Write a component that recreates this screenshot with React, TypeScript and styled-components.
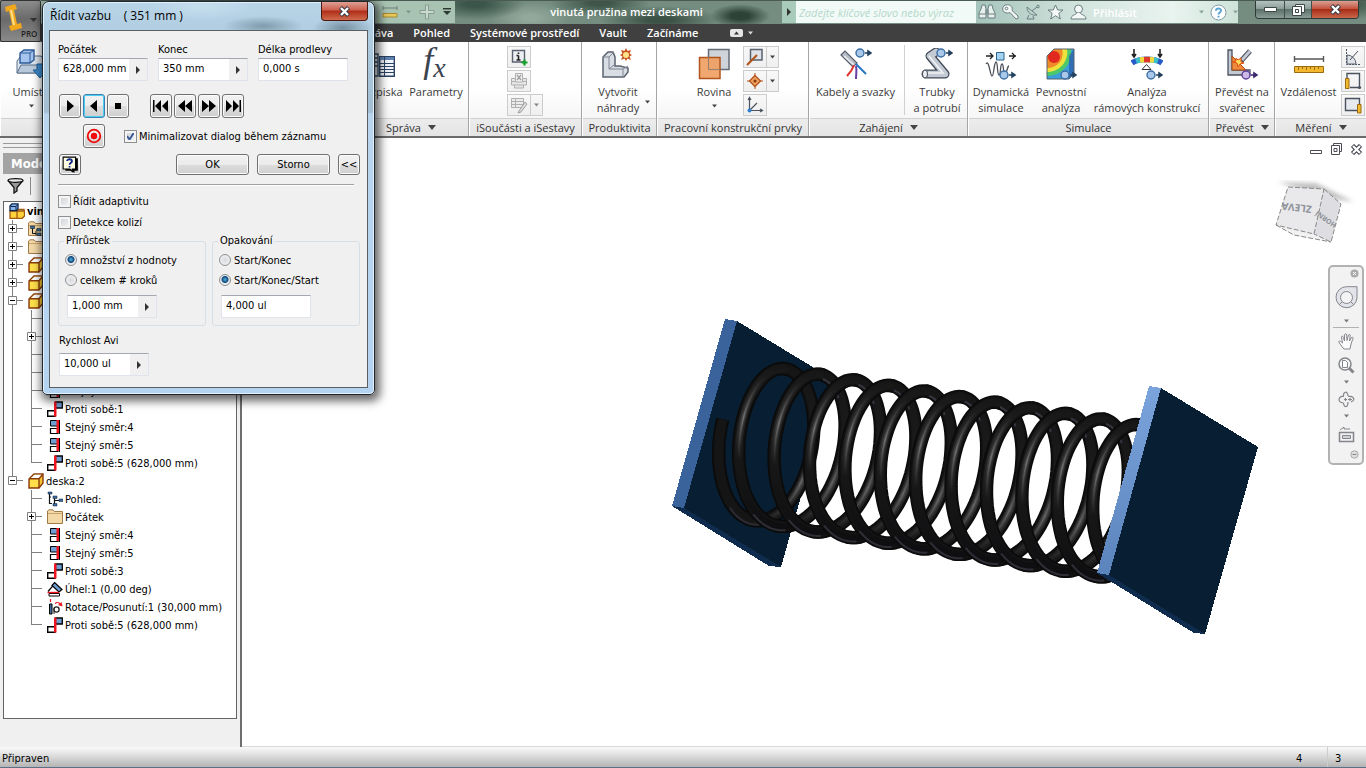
import React from "react";
import styled, { createGlobalStyle } from "styled-components";

const UI = '"Open Sans", "Noto Sans", sans-serif';
const DLG = '"DejaVu Sans Condensed", "DejaVu Sans", sans-serif';

const Global = createGlobalStyle`
  *, *::before, *::after { box-sizing: border-box; }
  body { margin: 0; background: #fff; font-family: ${UI}; font-size: 11px; color: #222; }
  button, input { font: inherit; color: inherit; margin: 0; padding: 0; }
  button { border: 0; background: none; }
  svg { display: block; flex: none; }
`;

/* ---------- frame ---------- */
const App_ = styled.div`
  position: relative;
  display: flex;
  flex-direction: column;
  min-height: 100vh;
`;
const Header = styled.header`
  display: flex;
  background:
    radial-gradient(ellipse 50px 16px at 475px 4px, #3c554a 20%, transparent),
    radial-gradient(ellipse 40px 16px at 530px 18px, #93a79b 20%, transparent),
    radial-gradient(ellipse 50px 14px at 600px 3px, #3f554a 20%, transparent),
    radial-gradient(ellipse 60px 14px at 660px 20px, #3c5246 20%, transparent),
    radial-gradient(ellipse 30px 12px at 740px 16px, #2d4238 30%, transparent),
    radial-gradient(ellipse 60px 16px at 1340px 4px, #3e5648 20%, transparent),
    #748d80;
`;
const AppButton = styled.button`
  width: 41px;
  height: 42px;
  border: 1px solid #333;
  border-radius: 2px;
  background: linear-gradient(#8c8c8c, #6a6a6a 45%, #8a8a8a);
`;
const HeaderRows = styled.div`
  flex: 1;
  min-width: 0;
`;
const TitleRow = styled.div`
  display: flex;
  height: 24px;
  border-top: 1px solid #4a5b54;
`;
const QuickBar = styled.div`
  width: 414px;
  height: 22px;
  display: flex;
  align-items: center;
  justify-content: flex-end;
  gap: 8px;
  padding-right: 4px;
  background: #a9c3b2;
`;
const DocTitle = styled.h1`
  flex: 1;
  margin: 0;
  padding-left: 16px;
  font-size: 11px;
  line-height: 22px;
  font-weight: 600;
  color: #fff;
  text-align: center;
  white-space: nowrap;
`;
const Search = styled.div`
  width: 194px;
  display: flex;
  height: 22px;
  background: #f2faf7;
`;
const SearchArrow = styled.button`
  width: 14px;
  background: #a9cbbb;
  display: flex;
  align-items: center;
  justify-content: center;
`;
const SearchInput = styled.input`
  flex: 1;
  min-width: 0;
  border: 0;
  padding-left: 3px;
  background: transparent;
  font-style: italic;
  &::placeholder { color: #b4d8ca; opacity: 1; }
`;
const InfoTools = styled.div`
  width: 262px;
  height: 22px;
  padding-left: 2px;
  display: flex;
  align-items: center;
  gap: 6px;
  background: linear-gradient(90deg, #a5c4bb, #d3e4de 40%, #e9f3ef 75%, #cfe3da);
`;
const SignIn = styled.button`
  width: 112px;
  text-align: left;
  font-weight: 600;
  color: #fff;
  display: flex;
  align-items: center;
  justify-content: space-between;
`;
const WinButtons = styled.div`
  margin: 0 7px 0 17px;
  display: flex;
  height: 18px;
  border: 1px solid #2f3a38;
  border-top: 0;
  border-radius: 0 0 4px 4px;
  overflow: hidden;
`;
const WinButton = styled.button<{ $red?: boolean; $w: number }>`
  width: ${(p) => p.$w}px;
  display: flex;
  align-items: center;
  justify-content: center;
  border-right: 1px solid #3f4c48;
  background: ${(p) =>
    p.$red
      ? "linear-gradient(#d9a093, #c4543f 45%, #a82c16 50%, #c9684b)"
      : "linear-gradient(#b5c2bf, #8c9e99 45%, #5d706a 50%, #8a9d96)"};
  &:last-child { border-right: 0; }
`;
const Tabs = styled.nav`
  display: flex;
  height: 18px;
  padding-left: 316px;
  background: #404040;
`;
const Tab = styled.button`
  margin-right: 20px;
  line-height: 18px;
  font-weight: 600;
  color: #fff;
  white-space: nowrap;
`;
const TabMenu = styled.div`
  display: flex;
  align-items: center;
  gap: 5px;
  margin-left: 12px;
`;

/* ---------- ribbon ---------- */
const Ribbon = styled.div`
  display: flex;
  height: 96px;
  border-bottom: 2px solid #6b6b6b;
  background: #fff;
`;
const Panel = styled.section<{ $w: number; $grow?: boolean }>`
  flex: ${(p) => (p.$grow ? 1 : "none")};
  width: ${(p) => p.$w}px;
  display: flex;
  flex-direction: column;
  border-right: ${(p) => (p.$grow ? 0 : "1px solid #a5a5a5")};
  border-left: 1px solid #fff;
`;
const PanelBody = styled.div<{ $left?: number }>`
  flex: 1;
  display: flex;
  justify-content: ${(p) => (p.$left === undefined ? "center" : "flex-start")};
  padding-left: ${(p) => p.$left ?? 0}px;
  background: linear-gradient(#fff 60%, #f6f6f6);
`;
const PanelLabel = styled.div`
  height: 18px;
  display: flex;
  align-items: center;
  justify-content: center;
  gap: 7px;
  border-top: 1px solid #d0d0d0;
  background: linear-gradient(#ececec, #e4e4e4);
  color: #333;
  white-space: nowrap;
`;
const BigButton = styled.button<{ $w: number }>`
  width: ${(p) => p.$w}px;
  padding-top: 6px;
  display: flex;
  flex-direction: column;
  align-items: center;
  gap: 4px;
  color: #3a3a3a;
  line-height: 16px;
  white-space: nowrap;
`;
const BigLabel = styled.span`
  display: block;
  text-align: center;
`;
const SideArrow = styled.span`
  align-self: flex-end;
  padding-bottom: 14px;
`;
const SmallCol = styled.div`
  padding-top: 4px;
  display: flex;
  flex-direction: column;
  gap: 2px;
`;
const SmallRow = styled.div`
  display: flex;
  height: 22px;
`;
const SmallButton = styled.button<{ $w?: number }>`
  width: ${(p) => p.$w ?? 24}px;
  height: 22px;
  margin-right: -1px;
  display: flex;
  align-items: center;
  justify-content: center;
  border: 1px solid #ccc;
  background: linear-gradient(#f8f8f8, #efefef);
`;
const Divider = styled.div`
  width: 1px;
  margin: 3px 3px;
  background: #d0d0d0;
`;

/* ---------- work area ---------- */
const Work = styled.main`
  flex: 1;
  display: flex;
  min-height: 608px;
`;
const Side = styled.aside`
  width: 242px;
  display: flex;
  flex-direction: column;
  padding: 5px 3px 28px 3px;
  border-right: 2px solid #6e6e6e;
  background: #f0f0f0;
  font-family: ${DLG};
  color: #000;
`;
const Grip = styled.div`
  height: 5px;
  border: solid #9a9a9a;
  border-width: 1px 0;
`;
const SideTitle = styled.h2`
  margin: 5px 0 0;
  height: 21px;
  padding-left: 8px;
  line-height: 21px;
  font-size: 13px;
  color: #fff;
  background: #a3a3a3;
`;
const SideTools = styled.div`
  height: 27px;
  display: flex;
  align-items: center;
  gap: 6px;
  padding: 0 0 4px 4px;
`;
const ToolLine = styled.div`
  width: 1px;
  height: 18px;
  background: #8a8a8a;
`;
const Tree = styled.ul`
  flex: 1;
  margin: 0;
  padding: 0;
  list-style: none;
  border: 1px solid #646464;
  background: #fff;
  overflow: hidden;
`;
const Node = styled.li`
  height: 18px;
  display: flex;
  align-items: center;
  white-space: nowrap;
`;
const NodeIcon = styled.span`
  width: 16px;
  margin: 0 2px 0 5px;
`;
const NodeText = styled.span<{ $b?: boolean }>`
  font-weight: ${(p) => (p.$b ? 700 : 400)};
`;

const Canvas = styled.div`
  position: relative;
  flex: 1;
  min-width: 0;
  background: #fff;
  border-bottom: 1px solid #d8d8d8;
`;
const Model = styled.svg`
  width: 100%;
  height: 100%;
`;
const DocButtons = styled.div`
  position: absolute;
  top: 5px;
  right: 3px;
  display: flex;
  gap: 7px;
`;
const CubeSpot = styled.div`
  position: absolute;
  top: 40px;
  right: 10px;
`;
const NavBar = styled.div`
  position: absolute;
  top: 127px;
  right: 2px;
  width: 36px;
  height: 200px;
  padding-top: 2px;
  display: flex;
  flex-direction: column;
  align-items: center;
  border: 2px solid #b2b2b2;
  border-radius: 5px;
  background: #f2f2f2;
`;
const NavSlot = styled.button<{ $h: number; $end?: boolean }>`
  width: 26px;
  height: ${(p) => p.$h}px;
  display: flex;
  align-items: center;
  justify-content: ${(p) => (p.$end ? "flex-end" : "center")};
`;
const NavRule = styled.div`
  width: 26px;
  height: 1px;
  background: #b2b2b2;
`;

const Status = styled.footer`
  height: 22px;
  display: flex;
  justify-content: space-between;
  padding-left: 2px;
  line-height: 24px;
  background: linear-gradient(#fafafa, #d8d8d8 50%, #b4b4b4);
  border-bottom: 2px solid #5c7186;
  font-family: ${DLG};
  color: #000;
`;
const StatusCounts = styled.div`
  display: flex;
  height: 20px;
`;
const Count = styled.span<{ $w: number; $first?: boolean }>`
  width: ${(p) => p.$w}px;
  padding-left: 7px;
  border-left: ${(p) => (p.$first ? 0 : "1px solid #cdcdcd")};
`;

/* ---------- dialog ---------- */
const Dialog = styled.section`
  position: absolute;
  left: 42px;
  top: 1px;
  width: 333px;
  display: flex;
  flex-direction: column;
  padding: 0 6px 6px;
  border: 1px solid #1f262c;
  border-radius: 7px 7px 5px 5px;
  box-shadow: inset 0 0 0 1px #e2f1fb, 2px 3px 10px 3px rgba(0, 0, 0, 0.6);
  background:
    radial-gradient(ellipse 40px 10px at 220px 24px, #7f9bad, transparent),
    radial-gradient(ellipse 50px 14px at 160px 4px, #c6dfee, transparent),
    radial-gradient(ellipse 30px 12px at 300px 26px, #7590a2, transparent),
    linear-gradient(#b9d5e8, #b0cde1 30px, #a3bed2 110px, #b9d5ee 112px, #b4d3f0);
  font-family: ${DLG};
  color: #000;
`;
const DialogHead = styled.header`
  display: flex;
  justify-content: space-between;
  height: 28px;
`;
const DialogTitle = styled.h2`
  margin: 0;
  padding: 7px 0 0 1px;
  font-family: ${UI};
  font-size: 12px;
  line-height: 14px;
  font-weight: 400;
  white-space: pre;
`;
const DialogClose = styled.button`
  width: 47px;
  height: 19px;
  display: flex;
  align-items: center;
  justify-content: center;
  border: 1px solid #4a1a12;
  border-top: 0;
  border-radius: 0 0 4px 4px;
  background: linear-gradient(#dea094, #cc5f4c 45%, #b02c18 50%, #cf6b4c);
`;
const Client = styled.form`
  display: flex;
  flex-direction: column;
  height: 358px;
  padding: 10px 6px 0 8px;
  border: 1px solid #5a5f64;
  background: #f0f0f0;
`;
const Row = styled.div<{ $gap?: number; $mt?: number; $pl?: number }>`
  display: flex;
  align-items: center;
  gap: ${(p) => p.$gap ?? 10}px;
  margin-top: ${(p) => p.$mt ?? 0}px;
  padding-left: ${(p) => p.$pl ?? 0}px;
`;
const Field = styled.label<{ $lh?: number }>`
  display: block;
  width: 90px;
  line-height: ${(p) => p.$lh ?? 17}px;
  white-space: nowrap;
`;
const Box = styled.span`
  display: flex;
  width: 90px;
  height: 23px;
  border: 1px solid #dfe3ea;
  border-top-color: #a4a8b0;
  background: #fff;
`;
const BoxInput = styled.input`
  flex: 1;
  min-width: 0;
  border: 0;
  padding: 0 0 2px 4px;
  background: transparent;
`;
const Spin = styled.span`
  width: 18px;
  display: flex;
  align-items: center;
  justify-content: center;
  background: #f0f0f0;
`;
const PushButton = styled.button<{ $w: number; $h: number; $hot?: boolean }>`
  width: ${(p) => p.$w}px;
  height: ${(p) => p.$h}px;
  display: flex;
  align-items: center;
  justify-content: center;
  border: 1px solid ${(p) => (p.$hot ? "#3c7fb1" : "#707070")};
  border-radius: 3px;
  box-shadow: inset 0 0 0 1px ${(p) => (p.$hot ? "#48d0f4" : "#fbfbfb")};
  background: linear-gradient(#f2f2f2, #ebebeb 50%, #dddddd 50%, #cfcfcf);
`;
const Spacer = styled.span<{ $w: number }>`
  width: ${(p) => p.$w}px;
`;
const Check = styled.label`
  display: flex;
  align-items: center;
  gap: 2px;
  height: 21px;
  white-space: nowrap;
`;
const CheckInput = styled.input`
  appearance: none;
  width: 13px;
  height: 13px;
  border: 1px solid #8e8f8f;
  box-shadow: inset 0 0 0 2px #f4f4f4;
  background: linear-gradient(135deg, #cbcfd5, #f6f6f6);
  &:checked {
    background:
      url("data:image/svg+xml,%3Csvg xmlns='http://www.w3.org/2000/svg' viewBox='0 0 11 11'%3E%3Cpath d='M2 5 4.500 8.500 9 1.500' fill='none' stroke='%233b5a9a' stroke-width='2'/%3E%3C/svg%3E"),
      linear-gradient(135deg, #cbcfd5, #f6f6f6);
  }
`;
const Rule = styled.hr`
  width: 296px;
  margin: 9px 0 5px;
  border: 0;
  border-top: 1px solid #a0a0a0;
  border-bottom: 1px solid #fff;
`;
const Group = styled.fieldset<{ $w: number }>`
  width: ${(p) => p.$w}px;
  height: 93px;
  min-width: 0;
  margin: 0;
  padding: 1px 0 0 6px;
  border: 1px solid #d5dfe5;
  border-radius: 3px;
`;
const Legend = styled.legend`
  padding: 0 2px;
  margin-left: -1px;
  line-height: 16px;
`;
const Radio = styled.label`
  display: flex;
  align-items: center;
  gap: 3px;
  height: 20px;
`;
const RadioInput = styled.input`
  appearance: none;
  width: 12px;
  height: 12px;
  border: 1px solid #8e8f8f;
  border-radius: 50%;
  background: radial-gradient(#d8dade, #f8f8f8);
  &:checked { background: radial-gradient(circle at 50% 45%, #4fb4e0 0, #12457a 3px, #e8ecf0 4px); }
`;

/* ---------- small glyphs ---------- */
const Down = ({ w = 5, c = "#444" }: { w?: number; c?: string }) => (
  <svg width={w} height={Math.ceil(w / 2) + 1} viewBox="0 0 8 5"><path d="M0 0H8L4 5Z" fill={c} /></svg>
);
const Right = () => (
  <svg width="5" height="8" viewBox="0 0 5 8"><path d="M0 0 4 4 0 8Z" fill="#333" /></svg>
);
const Goto = ({ x, y, c = "#a9c8ea", s = "#3b6ea5", a = "#24415f" }: any) => (
  <g transform={`translate(${x} ${y})`}>
    <path d="M5 0H10M8-2 11 0 8 2Z" stroke={a} strokeWidth="1.600" fill={a} />
    <circle cx="0" cy="0" r="4" fill={c} stroke={s} strokeWidth="1.400" />
  </g>
);
const CloseX = ({ s = 11 }: { s?: number }) => (
  <svg width={s} height="11" viewBox="0 0 12 11">
    <path d="M2 1.500 10 9.500M10 1.500 2 9.500" stroke="#3c3c48" strokeWidth="4.400" />
    <path d="M2.500 2 9.500 9M9.500 2 2.500 9" stroke="#fff" strokeWidth="2.400" />
  </svg>
);

/* ---------- spring geometry ---------- */
const TAU = Math.PI * 2;
function helix(from: number, to: number, px: number, py: number, s = 1) {
  const R = 78.2 * s;
  const m = 42.8 * s;
  const n = 40;
  let d = "";
  for (let i = 0; i <= n; i++) {
    const t = from + ((to - from) * i) / n;
    const x = (px * t) / TAU + R * 0.156 * Math.cos(t) - m * 0.988 * Math.sin(t);
    const y = (py * t) / TAU - R * 0.988 * Math.cos(t) - m * 0.156 * Math.sin(t);
    d += `${i ? "L" : "M"}${x.toFixed(1)} ${y.toFixed(1)}`;
  }
  return d;
}
const Wire = ({ from, to, px = 35.4, py = 5.6, g }: any) => {
  const d = helix(from, to, px, py);
  return (
    <g fill="none">
      <path d={d} stroke="#0a0a0a" strokeWidth="13.400" />
      <path d={d} stroke="#101011" strokeWidth="11" />
      <path d={d} stroke="#151516" strokeWidth="9" />
      <path d={d} stroke={`url(#${g}1)`} strokeWidth="7" />
      <path d={helix(from, to, px, py, 0.995)} stroke={`url(#${g}2)`} strokeWidth="4" />
      <path d={helix(from, to, px, py, 0.99)} stroke={`url(#${g}3)`} strokeWidth="1.600" />
    </g>
  );
};
const Shade = ({ id, c, y }: any) => (
  <linearGradient id={id} gradientUnits="userSpaceOnUse" x1="0" y1="-84" x2="0" y2="84">
    <stop offset="0" stopColor="#151516" />
    <stop offset={y - 0.24} stopColor="#1b1b1c" />
    <stop offset={y} stopColor={c} />
    <stop offset={y + 0.25} stopColor="#171718" />
    <stop offset="1" stopColor="#0e0e10" />
  </linearGradient>
);
const coils = Array.from({ length: 11 }, (_, k) => k);
const at = (k: number) => `translate(${772.6 + 35.4 * k} ${446 + 5.6 * k})`;

const SpringModel = () => (
  <Model viewBox="242 138 1124 608" role="img" aria-label="Model pružiny mezi deskami">
    <defs>
      <Shade id="f1" c="#2a2a2b" y={0.33} />
      <Shade id="f2" c="#424243" y={0.33} />
      <Shade id="f3" c="#6e6e6e" y={0.33} />
      <Shade id="b1" c="#303031" y={0.72} />
      <Shade id="b2" c="#484849" y={0.72} />
      <Shade id="b3" c="#646464" y={0.72} />
      <linearGradient id="edgeR" x1="0" y1="0" x2="0" y2="1">
        <stop offset="0" stopColor="#7ba4dd" />
        <stop offset="1" stopColor="#5b84bd" />
      </linearGradient>
    </defs>
    <g shapeRendering="crispEdges">
      <path d="M725 319 737 321 684 508 672 506Z" fill="#3a629b" />
      <path d="M672 506 684 508 781 567 769 566Z" fill="#0f2c4e" />
      <path d="M737 321 834 380 781 567 684 508Z" fill="#081f33" />
    </g>
    <g transform={at(0)}>
      <Wire from={-Math.PI - 0.05} to={0} px={14} py={5.6} g="b" />
    </g>
    {coils.map((k) => (
      <g key={k} transform={at(k)}>
        <Wire from={Math.PI - 0.05} to={TAU + 0.05} g="b" />
        <path d={helix(5.6, 6.25, 35.4, 5.6, 0.95)} fill="none" stroke="#37353f" strokeWidth="2" />
      </g>
    ))}
    <g transform={at(0)}>
      <Wire from={-4.92} to={-Math.PI} px={14} py={5.6} g="n" />
      <path d={helix(-3.7, -2.9, 14, 5.6, 1.05)} fill="none" stroke="#2c2a33" strokeWidth="2" />
    </g>
    {coils.map((k) => (
      <g key={k} transform={at(k)}>
        <Wire from={-0.1} to={Math.PI + 0.25} g="f" />
        <path d={helix(2.6, 3.3, 35.4, 5.6, 1.05)} fill="none" stroke="#2f2d36" strokeWidth="2" />
      </g>
    ))}
    <g shapeRendering="crispEdges">
      <path d="M1149 386 1161 388 1109 575 1097 573Z" fill="url(#edgeR)" />
      <path d="M1097 573 1109 575 1205 634 1194 633Z" fill="#0f2c4e" />
      <path d="M1161 388 1258 447 1205 634 1109 575Z" fill="#081f33" />
    </g>
  </Model>
);

/* ---------- tree ---------- */
const Cube = () => (
  <svg width="16" height="16" viewBox="0 0 16 16">
    <path d="M1 6 6 1H15V10L11 15H1Z" fill="#f7c531" stroke="#8a3c0c" strokeWidth="1.400" />
    <path d="M2 6H11V14H2Z" fill="#ffe04a" />
    <path d="M2.500 5.500 6.500 1.700H14L10.500 5.500Z" fill="#fff" />
    <path d="M1 5.800H11V15M11 5.800 15 1" stroke="#8a3c0c" strokeWidth="1.400" fill="none" />
  </svg>
);
const Folder = ({ views }: { views?: boolean }) => (
  <svg width="16" height="16" viewBox="0 0 16 16">
    <path d="M.5 14.500V2L2 .8H6L7.500 2.500H15.500V14.500Z" fill="#f4d9a8" stroke="#a07a4a" />
    <path d="M1 4.500H15" stroke="#c9a36c" />
    {views && (
      <>
        <path d="M4.500 7V12.500H8M8 10V14M8 9H9" stroke="#111" fill="none" />
        <path d="M2.500 5H6.500V7.500H2.500ZM9 7.500H13V10H9ZM9 12H13V14.500H9Z" fill="#3d6da3" stroke="#122" strokeWidth=".6" />
      </>
    )}
  </svg>
);
const Mate = () => (
  <svg width="16" height="16" viewBox="0 0 16 16">
    <path d="M.7 9.700H8V15.300H.7Z" fill="#fff" stroke="#000" strokeWidth="1.400" />
    <path d="M8.500 1H15.300V7H8.500Z" fill="#6f9fd2" stroke="#000" strokeWidth="1.300" />
    <path d="M7 .5H9.500V15.500H7Z" fill="#f0141e" />
  </svg>
);
const Flush = () => (
  <svg width="16" height="16" viewBox="0 0 16 16">
    <path d="M3.500 1.500H11V7H3.500Z" fill="#6f9fd2" stroke="#000" />
    <path d="M5.500 9.500H11V14.500H3.500V9.500Z" fill="#fff" stroke="#000" strokeWidth="1.200" />
    <path d="M9.500 1H12V14H9.500Z" fill="#f0141e" />
    <path d="M12.500 1V15" stroke="#000" />
  </svg>
);
const Views = () => (
  <svg width="16" height="16" viewBox="0 0 16 16">
    <path d="M2.500 3V12.500H5M2.500 6H4M7.500 7V13M7.500 9.500H13" stroke="#111" fill="none" strokeWidth="1.200" />
    <path d="M1 1H5V3H1ZM6 5H10V7.500H6ZM12 8H16V10.500H12ZM6 12.500H10V15H6Z" fill="#3d6da3" stroke="#123" strokeWidth=".5" />
  </svg>
);
const Angle = () => (
  <svg width="16" height="16" viewBox="0 0 16 16">
    <path d="M1 10.500 7 3.500" stroke="#000" strokeWidth="1.200" />
    <path d="M7.500 1.500 15 8.500 12 11 5 4.500Z" fill="#6f9fd2" stroke="#000" strokeWidth="1.200" />
    <path d="M2 12.500H12.500V15H2Z" fill="#fff" stroke="#000" />
    <path d="M.5 11.500H12" stroke="#f0141e" strokeWidth="1.400" />
  </svg>
);
const Motion = () => (
  <svg width="16" height="16" viewBox="0 0 16 16">
    <path d="M2.500 5H5V15H2.500Z" fill="#3d6da3" stroke="#000" />
    <path d="M3.500 0V3M8 4.500C10 3 12 3 13.500 5.500" stroke="#f0141e" fill="none" strokeWidth="1.200" />
    <path d="M11 6 15.500 7.500 14.500 3Z" fill="#f0141e" />
    <circle cx="9.500" cy="10.500" r="2.600" fill="#fff" stroke="#222" strokeWidth="1.300" />
    <path d="M7 9V15" stroke="#222" />
  </svg>
);
const Assembly = () => (
  <svg width="16" height="16" viewBox="0 0 16 16">
    <path d="M1 8H15.500V13L13 15.500H1Z" fill="#ffd23c" stroke="#a05a10" strokeWidth="1.300" />
    <path d="M8 8V15M8 9 10 6.500H15V8" fill="none" stroke="#a05a10" strokeWidth="1.300" />
    <path d="M1 3 3 .8H9V5.500L7.500 7.700H1Z" fill="#8ab4e6" stroke="#0b2650" strokeWidth="1.300" />
    <path d="M1.500 3.500H7V7.500M7 3.500 9 1" stroke="#0b2650" fill="none" />
  </svg>
);
const icons: Record<string, React.ReactNode> = {
  asm: <Assembly />, cube: <Cube />, folder: <Folder />, vfolder: <Folder views />,
  mate: <Mate />, flush: <Flush />, views: <Views />, angle: <Angle />, motion: <Motion />,
};
/* box is the expander's sign; empty draws the passing line only; blank draws nothing */
const Guide = ({ box, last, empty, blank }: { box?: string; last?: boolean; empty?: boolean; blank?: boolean }) => (
  <svg width="19" height="18" viewBox="0 0 19 18">
    {!blank && (
      <path d={`M8.500 0V${last ? 9 : 18}${empty ? "" : "M8.500 8.500H19"}`} stroke="#808080" fill="none" />
    )}
    {box && (
      <>
        <path d="M4.500 4.500H12.500V12.500H4.500Z" fill="#fff" stroke="#808080" />
        <path d={`M6 8.500H11${box === "+" ? "M8.500 6V11" : ""}`} stroke="#000" />
      </>
    )}
  </svg>
);
type T = { i: string; t?: string; l: number; box?: string; last?: boolean; open?: boolean };
const tree: T[] = [
  { i: "asm", t: "vinutá", l: 0 },
  { i: "vfolder", l: 1, box: "+" },
  { i: "folder", l: 1, box: "+" },
  { i: "cube", l: 1, box: "+" },
  { i: "cube", l: 1, box: "+" },
  { i: "cube", l: 1, box: "-" },
  { i: "views", l: 2, open: true },
  { i: "folder", l: 2, box: "+", open: true },
  { i: "flush", l: 2, open: true },
  { i: "flush", l: 2, open: true },
  { i: "flush", t: "Stejný směr:3", l: 2, open: true },
  { i: "mate", t: "Proti sobě:1", l: 2, open: true },
  { i: "flush", t: "Stejný směr:4", l: 2, open: true },
  { i: "flush", t: "Stejný směr:5", l: 2, open: true },
  { i: "mate", t: "Proti sobě:5 (628,000 mm)", l: 2, open: true, last: true },
  { i: "cube", t: "deska:2", l: 1, box: "-", last: true },
  { i: "views", t: "Pohled:", l: 2 },
  { i: "folder", t: "Počátek", l: 2, box: "+" },
  { i: "flush", t: "Stejný směr:4", l: 2 },
  { i: "flush", t: "Stejný směr:5", l: 2 },
  { i: "mate", t: "Proti sobě:3", l: 2 },
  { i: "angle", t: "Úhel:1 (0,00 deg)", l: 2 },
  { i: "motion", t: "Rotace/Posunutí:1 (30,000 mm)", l: 2 },
  { i: "mate", t: "Proti sobě:5 (628,000 mm)", l: 2, last: true },
];

/* ---------- ribbon icons, 32 px ---------- */
const I32 = ({ children }: { children: React.ReactNode }) => (
  <svg width="32" height="32" viewBox="0 0 32 32" fill="none">{children}</svg>
);
const I18 = ({ children }: { children: React.ReactNode }) => (
  <svg width="18" height="18" viewBox="0 0 18 18" fill="none">{children}</svg>
);
const Place = () => (
  <I32>
    <path d="M2 13 6 8H26L30 13V25H2Z" fill="#dfe6ee" stroke="#5a6f88" />
    <path d="M5 5 9 2H19V12L15 15H5Z" fill="#a6c5ee" stroke="#2c5a98" strokeWidth="1.400" />
    <path d="M5 5H15V15M15 5 19 2" stroke="#2c5a98" />
    <path d="M2 25 6 17H32L28 25Z" fill="#b9c9dc" stroke="#5a6f88" />
    <path d="M22 16H28V22H32L25 30 18 22H22Z" fill="#3f8fd2" stroke="#1d5a94" />
  </I32>
);
const Bom = () => (
  <I32>
    <path d="M4 6H14V28H4M14 10H6M14 14H6M14 18H6" stroke="#3a5170" strokeWidth="1.400" />
    <path d="M15.700 8.700H30.300V28.300H15.700Z" fill="#f2f5f9" stroke="#2d4463" strokeWidth="1.400" />
    <path d="M16 9H30V12H16Z" fill="#5e82ae" />
    <path d="M16 15.500H30M16 18.500H30M16 21.500H30M16 24.500H30M20.500 9V28" stroke="#2d4463" />
  </I32>
);
const Fx = styled.span`
  height: 32px;
  padding-right: 3px;
  font: italic 36px/25px "Liberation Serif", serif;
  color: #3c4450;
  sub { font-size: 28px; line-height: 0; vertical-align: -5px; }
`;
const Substitute = () => (
  <I32>
    <path d="M1 9 6 4H11L13 9V18H18L26 20V24L22 29H1Z" fill="#d9dde4" stroke="#5b6270" strokeWidth="1.500" />
    <path d="M1 9H7V21H21V29M7 9 12 4M7 21 12 17M21 21 26 18" stroke="#7f8794" />
    <path d="M24 0 25.500 3 29 2 27.500 5.500 30 7 27.500 8.500 29 12 25.500 10.500 24 13 22.500 10.500 19 12 20.500 8.500 18 7 20.500 5.500 19 2 22.500 3Z" fill="#c8501a" />
    <circle cx="24" cy="7" r="3" fill="#ffe28a" />
  </I32>
);
const PlaneIcon = () => (
  <I32>
    <path d="M10.500 1.500H31V21.500H10.500Z" fill="#cfd3da" stroke="#646c7a" strokeWidth="1.500" />
    <path d="M1.500 9.500H22V30.500H1.500Z" fill="#f0a063" fillOpacity=".92" stroke="#b0551c" strokeWidth="1.500" />
    <path d="M10.500 9V21.500H22" stroke="#9b7f6e" />
  </I32>
);
const Cables = () => (
  <I32>
    <path d="M1 7 5 3 17 15 13 19Z" fill="#b8bec8" stroke="#555d6a" strokeWidth="1.200" />
    <path d="M4 8 14 17" stroke="#eef0f3" strokeWidth="1.500" />
    <path d="M14 17C12 23 10 25 7 28" stroke="#e0302c" strokeWidth="2" />
    <path d="M16 18C17 23 16 26 16 31" stroke="#6b3fa8" strokeWidth="2" />
    <path d="M16 16 26 26" stroke="#2477c4" strokeWidth="2" />
    <Goto x={20} y={5} />
  </I32>
);
const Tubes = () => (
  <I32>
    <path d="M5 26H24L9 8 15 4" stroke="#3f4855" strokeWidth="9" strokeLinecap="round" strokeLinejoin="round" />
    <path d="M5 26H24L9 8 15 4" stroke="#c4cad3" strokeWidth="6.500" strokeLinecap="round" strokeLinejoin="round" />
    <path d="M6 25H22L8 8" stroke="#f0f2f5" strokeWidth="1.600" />
    <ellipse cx="4" cy="26" rx="2.500" ry="4" fill="#eef0f3" stroke="#3f4855" />
    <Goto x={20} y={5} />
  </I32>
);
const Dynamic = () => (
  <I32>
    <path d="M1 8H8M24 8H31M5 5 8 8 5 11M27 5 30 8 27 11" stroke="#222" strokeWidth="1.300" />
    <path d="M11.500 4.500H19V12H11.500Z" fill="#a6d3f2" stroke="#26648e" />
    <path d="M1 16C4 10 5 28 7 28S9 14 11 14 12 27 14 27 15 16 17 16 18 26 20 26 22 18 24 18" stroke="#4a4f58" strokeWidth="1.300" />
    <Goto x={19} y={27} />
  </I32>
);
const Stress = () => (
  <I32>
    <path d="M2 8 9 1H29V26L24 31H2Z" fill="#3aa0dc" />
    <path d="M2 8 9 1H26C28 16 16 28 2 28Z" fill="#4cc86a" />
    <path d="M2 8 9 1H22C24 14 14 24 2 24Z" fill="#f0e23c" />
    <path d="M2 8 9 1H17C20 12 12 20 2 20Z" fill="#f08a28" />
    <ellipse cx="9" cy="9" rx="6" ry="6" fill="#e0281e" />
    <path d="M24 8 29 1V26L24 31Z" fill="#2a5aa8" fillOpacity=".7" />
    <path d="M2 8 9 1H29V26L24 31H2Z" stroke="#56606e" />
    <Goto x={20} y={27} />
  </I32>
);
const FrameAn = () => (
  <I32>
    <path d="M3 1V9M29 1V9M1 6 3 9 5 6M27 6 29 9 31 6" stroke="#222" strokeWidth="1.600" />
    <path d="M1 15C8 10 24 10 31 15" stroke="#2a5ac8" strokeWidth="5.500" />
    <path d="M5 13C11 11 21 11 27 13" stroke="#3cc0c8" strokeWidth="5.500" />
    <path d="M9 12C13 11.500 19 11.500 23 12" stroke="#f0d83c" strokeWidth="5.500" />
    <path d="M13 11.600H19" stroke="#e0382c" strokeWidth="5.500" />
    <path d="M11 21.500 15.500 16.500 20 21.500Z" fill="#fff" stroke="#333" />
    <Goto x={20} y={27} />
  </I32>
);
const Weld = () => (
  <I32>
    <path d="M2 2H6V22H24V27H2Z" fill="#c3c9d2" stroke="#4a525f" strokeWidth="1.300" />
    <path d="M6 8V22H20Z" fill="#f08a3c" stroke="#a84c12" />
    <path d="M15 13 24 3" stroke="#4a525f" strokeWidth="5" />
    <path d="M16 12 24 3" stroke="#c3c9d2" strokeWidth="3" />
    <path d="M10 10 12 12 15 10 15 14 18 15 14 16 12 19 11 15 7 14 10 13Z" fill="#ffe05a" stroke="#e04a12" />
    <Goto x={20} y={27} c="#cdb8ea" s="#5e3f98" a="#3a2a6a" />
  </I32>
);
const RulerIcon = () => (
  <I32>
    <path d="M2 11H30M1.500 8V14M30.500 8V14" stroke="#555" strokeWidth="1.400" />
    <path d="M1.500 18.500H30.500V24.500H1.500Z" fill="#f2b92e" stroke="#9a6a10" />
    <path d="M5.500 19V22M9.500 19V21M13.500 19V22M17.500 19V21M21.500 19V22M25.500 19V21" stroke="#9a6a10" />
  </I32>
);

const Value = ({ id, v, spin }: { id: string; v: string; spin?: boolean }) => (
  <Box>
    <BoxInput id={id} defaultValue={v} aria-label={id} />
    {spin && <Spin><Right /></Spin>}
  </Box>
);
const Media = ({ d, label, hot }: { d: string; label: string; hot?: boolean }) => (
  <PushButton type="button" $w={22} $h={24} $hot={hot} aria-label={label}>
    <svg width="18" height="14" viewBox="0 0 18 14"><path d={d} fill="#000" /></svg>
  </PushButton>
);
const LinkDialog = () => (
  <Dialog role="dialog" aria-label="Řídit vazbu">
    <DialogHead>
      <DialogTitle>{"Řídit vazbu    ( 351 mm )"}</DialogTitle>
      <DialogClose aria-label="Zavřít"><CloseX s={13} /></DialogClose>
    </DialogHead>
    <Client onSubmit={(e) => e.preventDefault()}>
      <Row $gap={10}>
        <Field htmlFor="start">Počátek<Value id="start" v="628,000 mm" spin /></Field>
        <Field htmlFor="end">Konec<Value id="end" v="350 mm" spin /></Field>
        <Field htmlFor="delay">Délka prodlevy<Value id="delay" v="0,000 s" /></Field>
      </Row>
      <Row $gap={2} $mt={13} $pl={1}>
        <Media label="Vpřed" d="M6 1 13 7 6 13Z" />
        <Media label="Vzad" hot d="M12 1 5 7 12 13Z" />
        <Media label="Stop" d="M6 4H12V10H6Z" />
        <Spacer $w={17} />
        <Media label="Na začátek" d="M1 1H2.500V13H1ZM9 1 3 7 9 13ZM16 1 10 7 16 13Z" />
        <Media label="Krok zpět" d="M9 1 2 7 9 13ZM16 1 9 7 16 13Z" />
        <Media label="Krok vpřed" d="M2 1 9 7 2 13ZM9 1 16 7 9 13Z" />
        <Media label="Na konec" d="M15.500 1H17V13H15.500ZM2 1 8 7 2 13ZM9 1 15 7 9 13Z" />
      </Row>
      <Row $gap={19} $mt={6} $pl={25}>
        <PushButton type="button" $w={22} $h={24} aria-label="Záznam">
          <svg width="16" height="16" viewBox="0 0 16 16">
            <circle cx="8" cy="8" r="6.300" fill="none" stroke="#f00a0a" strokeWidth="1.800" />
            <circle cx="8" cy="8" r="3.200" fill="#f00a0a" />
          </svg>
        </PushButton>
        <Check><CheckInput type="checkbox" defaultChecked />Minimalizovat dialog během záznamu</Check>
      </Row>
      <Row $gap={8} $mt={6} $pl={1}>
        <PushButton type="button" $w={22} $h={21} aria-label="Nápověda">
          <svg width="17" height="17" viewBox="0 0 15 15">
            <path d="M3 2H14V13H11V15L8 13H3Z" fill="#000" />
            <path d="M1 1H12V11.500H9V13.500L7 11.500H1Z" fill="#fffde0" stroke="#000" />
            <path d="M4.500 4.500C4.500 2.300 8.800 2.300 8.800 4.600 8.800 6 6.700 6 6.700 7.800M6.700 8.800V10.200" fill="none" stroke="#102a8a" strokeWidth="1.600" />
          </svg>
        </PushButton>
        <Spacer $w={79} />
        <PushButton type="submit" $w={73} $h={21}>OK</PushButton>
        <PushButton type="button" $w={73} $h={21}>Storno</PushButton>
        <PushButton type="button" $w={22} $h={21}>&lt;&lt;</PushButton>
      </Row>
      <Rule />
      <Check><CheckInput type="checkbox" />Řídit adaptivitu</Check>
      <Check><CheckInput type="checkbox" />Detekce kolizí</Check>
      <Row $gap={6}>
        <Group $w={148}>
          <Legend>Přírůstek</Legend>
          <Radio><RadioInput type="radio" name="inc" defaultChecked />množství z hodnoty</Radio>
          <Radio><RadioInput type="radio" name="inc" />celkem # kroků</Radio>
          <Row $mt={5} $pl={2}><Value id="inc" v="1,000 mm" spin /></Row>
        </Group>
        <Group $w={148}>
          <Legend>Opakování</Legend>
          <Radio><RadioInput type="radio" name="rep" />Start/Konec</Radio>
          <Radio><RadioInput type="radio" name="rep" defaultChecked />Start/Konec/Start</Radio>
          <Row $mt={5} $pl={2}><Value id="rep" v="4,000 ul" /></Row>
        </Group>
      </Row>
      <Row $mt={3} $pl={1}>
        <Field htmlFor="avi" $lh={24}>Rychlost Avi<Value id="avi" v="10,000 ul" spin /></Field>
      </Row>
    </Client>
  </Dialog>
);

const ViewCube = () => (
  <svg width="90" height="68" viewBox="0 0 90 68">
    <defs>
      <filter id="soft"><feGaussianBlur stdDeviation="2" /></filter>
    </defs>
    <path d="M12 4 50 5 88 24 60 20Z" fill="#999" opacity=".6" filter="url(#soft)" />
    <path d="M22 9 58 11 48 56 10 47Z" fill="#e9e9ec" />
    <path d="M58 11 75 26 65 64 48 56Z" fill="#dedee2" />
    <path d="M10 47 48 56 65 64 28 57Z" fill="#f2f2f2" />
    <path d="M22 9 58 11 48 56 10 47ZM58 11 75 26 65 64 48 56M10 47 28 57 65 64" fill="none" stroke="#888" strokeDasharray="5 2" />
    <g fontFamily={UI} fontWeight="700" fill="#8e9198">
      <text fontSize="10" transform="translate(46 28) rotate(187)">ZLEVA</text>
      <text fontSize="7" transform="translate(71 46) rotate(215)">HORNÍ</text>
    </g>
  </svg>
);

export default function App() {
  return (
    <App_>
      <Global />
      <Header>
        <AppButton aria-label="Inventor Pro">
          <svg width="39" height="40" viewBox="0 0 39 40">
            <path d="M4 6 14 3 16 8 13 9 16 23 20 22 21 27 10 30 8 25 11 24 8 10 5 11Z" fill="#f2a81d" />
            <path d="M10 9 13 24" stroke="#ffe08a" strokeWidth="2" />
            <path d="M29 17H36L32.500 21Z" fill="#333" />
            <text x="20" y="36" fontFamily={UI} fontSize="8" fontWeight="600" fill="#222">PRO</text>
          </svg>
        </AppButton>
        <HeaderRows>
          <TitleRow>
            <QuickBar>
              <svg width="16" height="14" viewBox="0 0 16 14">
                <path d="M1 3H15M1 1V5M15 1V5" stroke="#6c8076" />
                <path d="M1 8.500H15V12H1Z" fill="#e9c85a" stroke="#a88a30" />
              </svg>
              <Down c="#7d9488" />
              <svg width="16" height="16" viewBox="0 0 16 16">
                <path d="M6.500 1H9.500V6.500H15V9.500H9.500V15H6.500V9.500H1V6.500H6.500Z" fill="#c9dbd0" stroke="#869b8f" />
              </svg>
              <svg width="8" height="8" viewBox="0 0 8 8"><path d="M0 0H8V1.500H0ZM0 3H8L4 7Z" fill="#2c3a33" /></svg>
            </QuickBar>
            <DocTitle>vinutá pružina mezi deskami</DocTitle>
            <Search>
              <SearchArrow aria-label="Rozbalit"><Right /></SearchArrow>
              <SearchInput aria-label="Hledat" placeholder="Zadejte klíčové slovo nebo výraz" />
            </Search>
            <InfoTools>
              <svg width="18" height="16" viewBox="0 0 18 16" fill="#e8f0ee" stroke="#6b7f80">
                <path d="M3 5 4 1H7L8 5V14H1V9ZM10 5 11 1H14L15 5 17 9V14H10ZM8 6H10V9H8ZM1 10H8M10 10H17" />
              </svg>
              <svg width="17" height="16" viewBox="0 0 17 16" fill="#f2f6f5" stroke="#6b7f80">
                <path d="M8 8.500 14 15 16 14.500V12L10 6.500C11 3 8.500 .7 5.500 .7 2 .7 .7 3 .7 5 .7 8 4 10 8 8.500Z" />
                <circle cx="4.500" cy="4.500" r="1.300" />
              </svg>
              <svg width="16" height="16" viewBox="0 0 16 16" fill="none" stroke="#6b7f80">
                <path d="M2 3C2 9 7 12 12 11ZM7 7 12 3M4 11 2 15H9L8 12" /><circle cx="13" cy="2.500" r="1.300" />
              </svg>
              <svg width="17" height="16" viewBox="0 0 17 16" fill="#f4f8f7" stroke="#6b7f80">
                <path d="M8.500 1 10.700 6H16L11.800 9.300 13.300 15 8.500 11.700 3.700 15 5.200 9.300 1 6H6.300Z" />
              </svg>
              <svg width="17" height="16" viewBox="0 0 17 16" fill="#f4f8f7" stroke="#6b7f80">
                <circle cx="8.500" cy="5" r="4" /><path d="M6.500 9C6.500 11 1 10.500 1 15H16C16 10.500 10.500 11 10.500 9" />
              </svg>
              <SignIn>Přihlásit<Down c="#8ba39a" /></SignIn>
              <svg width="17" height="17" viewBox="0 0 17 17">
                <circle cx="8.500" cy="8.500" r="7.500" fill="#fff" stroke="#7f9aa5" />
                <path d="M6 6.800C6 3.700 11 3.700 11 6.700 11 8.500 8.500 8.500 8.500 10.500M8.500 11.700V13.500" fill="none" stroke="#5aa7d6" strokeWidth="2" />
              </svg>
              <Down c="#8ba39a" />
            </InfoTools>
            <WinButtons>
              <WinButton $w={29} aria-label="Minimalizovat">
                <svg width="13" height="5" viewBox="0 0 13 5"><path d="M.5 .5H12.500V4.500H.5Z" fill="#fff" stroke="#3c4848" /></svg>
              </WinButton>
              <WinButton $w={27} aria-label="Obnovit">
                <svg width="13" height="12" viewBox="0 0 13 12" fill="#fff" stroke="#3c4848">
                  <path d="M3.500 .5H12.500V8.500H3.500Z" /><path d="M.5 2.500H9.500V11.500H.5ZM3.500 5.500H6.500V8.500H3.500Z" fillRule="evenodd" />
                </svg>
              </WinButton>
              <WinButton $w={46} $red aria-label="Zavřít"><CloseX s={13} /></WinButton>
            </WinButtons>
          </TitleRow>
          <Tabs>
            <Tab>Správa</Tab>
            <Tab>Pohled</Tab>
            <Tab>Systémové prostředí</Tab>
            <Tab>Vault</Tab>
            <Tab>Začínáme</Tab>
            <TabMenu>
              <svg width="13" height="8" viewBox="0 0 13 8"><rect width="13" height="8" rx="2" fill="#e6e6e6" /><path d="M4 5.500H9L6.500 2.500Z" fill="#333" /></svg>
              <Down c="#ddd" />
            </TabMenu>
          </Tabs>
        </HeaderRows>
      </Header>

      <Ribbon>
        <Panel $w={353}>
          <PanelBody $left={0}>
            <BigButton $w={60}><Place /><BigLabel>Umístit</BigLabel><Down /></BigButton>
          </PanelBody>
          <PanelLabel />
        </Panel>
        <Panel $w={116}>
          <PanelBody $left={0}>
            <BigButton $w={52}><Bom /><BigLabel>Rozpiska</BigLabel></BigButton>
            <BigButton $w={60}><Fx>f<sub>x</sub></Fx><BigLabel>Parametry</BigLabel></BigButton>
          </PanelBody>
          <PanelLabel>Správa<Down w={8} /></PanelLabel>
        </Panel>
        <Panel $w={113}>
          <PanelBody $left={37}>
            <SmallCol>
              <SmallRow>
                <SmallButton aria-label="Vytvořit iSoučást">
                  <I18>
                    <path d="M2.500 2.500H14.500V14H2.500Z" fill="#eceef2" stroke="#5a6270" strokeWidth="1.400" />
                    <path d="M8.500 4.500V6M8.500 7.500V12M6.500 7.500H8.500M6.500 12H10.500" stroke="#222" strokeWidth="1.600" />
                    <path d="M14.500 11.500V17.500M11.500 14.500H17.500" stroke="#12a02a" strokeWidth="2.200" />
                  </I18>
                </SmallButton>
              </SmallRow>
              <SmallRow>
                <SmallButton aria-label="Upravit tabulku">
                  <I18>
                    <path d="M1.500 6.500H5M12 6.500H16.500V13H1.500V6.500M1.500 9.500H16.500M4.500 13V16H13.500V13" fill="#e6e6e6" stroke="#b0b0b0" />
                    <path d="M5.500 1.500H12.500V10H5.500Z" fill="#f0f0f0" stroke="#b0b0b0" /><path d="M7 3 11 8M11 3 7 8" stroke="#a0a0a0" strokeWidth="1.300" />
                  </I18>
                </SmallButton>
              </SmallRow>
              <SmallRow>
                <SmallButton aria-label="Upravit rozsah">
                  <I18>
                    <path d="M1.500 2.500H13.500V11.500H1.500ZM1.500 5.500H13.500M1.500 8.500H13.500M5.500 2.500V11.500" fill="#ececec" stroke="#b0b0b0" />
                    <path d="M9 15 15 6 17 8 11 16 8 17Z" fill="#ddd" stroke="#a0a0a0" />
                  </I18>
                </SmallButton>
                <SmallButton $w={13} aria-label="Další"><Down c="#888" /></SmallButton>
              </SmallRow>
            </SmallCol>
          </PanelBody>
          <PanelLabel>iSoučásti a iSestavy</PanelLabel>
        </Panel>
        <Panel $w={75}>
          <PanelBody $left={8}>
            <BigButton $w={54}><Substitute /><BigLabel>Vytvořit<br />náhrady</BigLabel></BigButton>
            <SideArrow><Down /></SideArrow>
          </PanelBody>
          <PanelLabel>Produktivita</PanelLabel>
        </Panel>
        <Panel $w={152}>
          <PanelBody $left={27}>
            <BigButton $w={58}><PlaneIcon /><BigLabel>Rovina</BigLabel><Down /></BigButton>
            <SmallCol>
              <SmallRow>
                <SmallButton aria-label="Osa">
                  <I18><path d="M4.500 1.500H16V12H4.500Z" fill="#dfe2e7" stroke="#5a6270" strokeWidth="1.500" /><path d="M1 17 11 7" stroke="#b0551c" strokeWidth="2.200" /></I18>
                </SmallButton>
                <SmallButton $w={13} aria-label="Další osy"><Down /></SmallButton>
              </SmallRow>
              <SmallRow>
                <SmallButton aria-label="Bod">
                  <I18><path d="M9 1V17M1 9H17" stroke="#b0551c" /><path d="M9 3.500 14.500 9 9 14.500 3.500 9Z" fill="#f0a063" stroke="#b0551c" strokeWidth="1.300" /><circle cx="9" cy="9" r="1.600" fill="#8a3c0c" /></I18>
                </SmallButton>
                <SmallButton $w={13} aria-label="Další body"><Down /></SmallButton>
              </SmallRow>
              <SmallRow>
                <SmallButton aria-label="Souřadný systém">
                  <I18><path d="M3.500 15V2M3.500 14.500H16M3.500 14.500 11 7M2 4 3.500 1.500 5 4M14 13 16.500 14.500 14 16" stroke="#4a525f" strokeWidth="1.200" /><circle cx="3.500" cy="14.500" r="2" fill="#2f7fd0" /></I18>
                </SmallButton>
              </SmallRow>
            </SmallCol>
          </PanelBody>
          <PanelLabel>Pracovní konstrukční prvky</PanelLabel>
        </Panel>
        <Panel $w={159}>
          <PanelBody $left={0}>
            <BigButton $w={91}><Cables /><BigLabel>Kabely a svazky</BigLabel></BigButton>
            <Divider />
            <BigButton $w={58}><Tubes /><BigLabel>Trubky<br />a potrubí</BigLabel></BigButton>
          </PanelBody>
          <PanelLabel>Zahájení<Down w={8} /></PanelLabel>
        </Panel>
        <Panel $w={241}>
          <PanelBody $left={1}>
            <BigButton $w={62}><Dynamic /><BigLabel>Dynamická<br />simulace</BigLabel></BigButton>
            <BigButton $w={58}><Stress /><BigLabel>Pevnostní<br />analýza</BigLabel></BigButton>
            <BigButton $w={114}><FrameAn /><BigLabel>Analýza<br />rámových konstrukcí</BigLabel></BigButton>
          </PanelBody>
          <PanelLabel>Simulace</PanelLabel>
        </Panel>
        <Panel $w={66}>
          <PanelBody>
            <BigButton $w={62}><Weld /><BigLabel>Převést na<br />svařenec</BigLabel></BigButton>
          </PanelBody>
          <PanelLabel>Převést<Down w={8} /></PanelLabel>
        </Panel>
        <Panel $w={91} $grow>
          <PanelBody $left={0}>
            <BigButton $w={65}><RulerIcon /><BigLabel>Vzdálenost</BigLabel></BigButton>
            <SmallCol>
              <SmallRow>
                <SmallButton aria-label="Úhel">
                  <I18><path d="M2.500 1V16.500H17" stroke="#4a525f" strokeDasharray="2 1" /><path d="M3 7A9 9 0 0 1 12 16H3Z" fill="#dfe2e7" stroke="#5a6270" /><path d="M6 12 14 3" stroke="#4a525f" /></I18>
                </SmallButton>
              </SmallRow>
              <SmallRow>
                <SmallButton aria-label="Smyčka">
                  <I18><path d="M3 6V1.500H15.500V15.500H6" stroke="#4a525f" strokeWidth="1.400" /><circle cx="15.500" cy="15.500" r="1.600" fill="#4a525f" /><path d="M1.500 6.500H5V16.500H1.500Z" fill="#f2b92e" stroke="#9a6a10" /></I18>
                </SmallButton>
              </SmallRow>
              <SmallRow>
                <SmallButton aria-label="Plocha">
                  <I18><path d="M1.500 2.500H15.500V14.500H1.500Z" fill="#e6e9ee" stroke="#4a525f" strokeWidth="1.400" /><path d="M13.500 8.500H17V17H13.500Z" fill="#f2b92e" stroke="#9a6a10" /></I18>
                </SmallButton>
              </SmallRow>
            </SmallCol>
          </PanelBody>
          <PanelLabel>Měření<Down w={8} /></PanelLabel>
        </Panel>
      </Ribbon>

      <Work>
        <Side>
          <Grip />
          <SideTitle>Model</SideTitle>
          <SideTools>
            <svg width="17" height="16" viewBox="0 0 17 16">
              <path d="M1 2.500 7 9.500V15L10 13V9.500L16 2.500" fill="#999" stroke="#111" strokeWidth="1.300" />
              <ellipse cx="8.500" cy="2.500" rx="7.500" ry="1.800" fill="#e8e8e8" stroke="#111" strokeWidth="1.300" />
            </svg>
            <ToolLine />
          </SideTools>
          <Tree>
            {tree.map((n, i) => (
              <Node key={i}>
                {n.l === 1 && <Guide box={n.box} last={n.last} />}
                {n.l === 2 && <Guide empty blank={!n.open} />}
                {n.l === 2 && <Guide box={n.box} last={n.last} />}
                <NodeIcon>{icons[n.i]}</NodeIcon>
                {n.t && <NodeText $b={n.l === 0}>{n.t}</NodeText>}
              </Node>
            ))}
          </Tree>
        </Side>
        <Canvas>
          <SpringModel />
          <DocButtons>
            <button aria-label="Minimalizovat okno">
              <svg width="14" height="13" viewBox="0 0 14 13"><path d="M1.500 7.500H12.500V10.500H1.500Z" fill="#fff" stroke="#4c4c55" /></svg>
            </button>
            <button aria-label="Obnovit okno">
              <svg width="13" height="13" viewBox="0 0 13 13" fill="#fff" stroke="#4c4c55"><path d="M3.500 .5H11.500V8.500H3.500Z" /><path d="M1.500 2.500H9.500V11.500H1.500ZM4 5.500H7V8.500H4Z" /></svg>
            </button>
            <button aria-label="Zavřít okno"><CloseX s={13} /></button>
          </DocButtons>
          <CubeSpot><ViewCube /></CubeSpot>
          <NavBar>
            <NavSlot $h={8} $end aria-label="Zavřít panel">
              <svg width="9" height="9" viewBox="0 0 9 9"><circle cx="4.500" cy="4.500" r="4" fill="#aaa" /><path d="M3 3 6 6M6 3 3 6" stroke="#fff" /></svg>
            </NavSlot>
            <NavSlot $h={42} aria-label="Kolečko">
              <svg width="23" height="23" viewBox="0 0 23 23" fill="#e3e4ea" stroke="#85858e">
                <path d="M11.500 .7H22V12A10.500 10.500 0 1 1 11.500 .7Z" /><circle cx="11.500" cy="11.500" r="6" fill="#f4f4f4" /><path d="M7 16 4 19M16 16 19 19" />
              </svg>
            </NavSlot>
            <NavSlot $h={4} aria-label="Možnosti kolečka"><Down c="#777" /></NavSlot>
            <NavSlot $h={4} as="span" />
            <NavRule />
            <NavSlot $h={28} aria-label="Posun">
              <svg width="17" height="17" viewBox="0 0 17 17" fill="#fbfbfb" stroke="#85858c">
                <path d="M5 15C3 12 1 10 .7 8.500 1.500 7.500 3 8.500 4.500 10L3.500 4C4 2.500 5 3 5.500 4.500L6.500 8 6.500 2C7 .5 8.500 .5 8.700 2L9 7.500 10.500 2C11.500 1 12.500 1.500 12.200 3L11.500 8 13.500 4.500C14.500 3.800 15.500 4.500 15 5.500L13 11 12 16H6Z" />
              </svg>
            </NavSlot>
            <NavSlot $h={20} aria-label="Zoom">
              <svg width="17" height="17" viewBox="0 0 17 17" fill="none" stroke="#85858c">
                <path d="M11 11 15.500 15.500" strokeWidth="3" /><circle cx="7" cy="7" r="6" fill="#f4f8f6" strokeWidth="1.500" /><path d="M4.500 3.500H7.500L9.500 5.500V10.500H4.500Z" fill="#fff" />
              </svg>
            </NavSlot>
            <NavSlot $h={14} aria-label="Možnosti zoomu"><Down c="#777" /></NavSlot>
            <NavSlot $h={20} aria-label="Orbita">
              <svg width="17" height="17" viewBox="0 0 17 17" fill="none" stroke="#85858c" strokeWidth="1.200">
                <path d="M5.500 12C-1 11 0 5.500 6 5.200M10 5.200C16 5.200 18 9 13 11M5.500 5C5 1 9.500-1 10 5M10 11C10 17 6 17 5.500 12M6 8.500H9M7.500 7V10M10 8.500H14M12 7V10" />
              </svg>
            </NavSlot>
            <NavSlot $h={14} aria-label="Možnosti orbity"><Down c="#777" /></NavSlot>
            <NavSlot $h={22} aria-label="Pohled na">
              <svg width="17" height="17" viewBox="0 0 17 17" fill="none" stroke="#85858c">
                <path d="M1.500 6.500H15.500V15.500H1.500Z" strokeWidth="1.500" /><path d="M4.500 9.500H12.500V12.500H4.500Z" fill="#d0d0d8" /><path d="M2 4 6 1V3H12" />
              </svg>
            </NavSlot>
            <NavSlot $h={18} $end aria-label="Nastavení panelu">
              <svg width="9" height="9" viewBox="0 0 9 9"><circle cx="4.500" cy="4.500" r="3.700" fill="#ddd" stroke="#aaa" /><path d="M2.500 4.500H6.500" stroke="#888" /></svg>
            </NavSlot>
          </NavBar>
        </Canvas>
      </Work>

      <Status>
        <span>Připraven</span>
        <StatusCounts><Count $w={38} $first>4</Count><Count $w={39}>3</Count></StatusCounts>
      </Status>
      <LinkDialog />
    </App_>
  );
}
